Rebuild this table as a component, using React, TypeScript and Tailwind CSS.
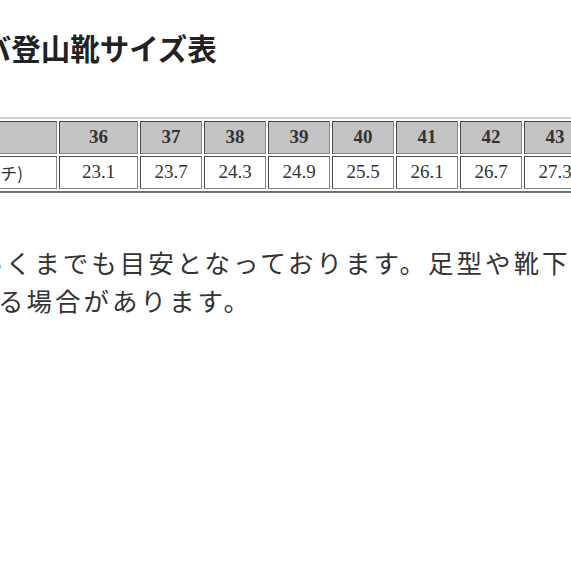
import React from "react";

const sizes = [
  { eu: "36", jp: "23.1", w: "w-[79px]" },
  { eu: "37", jp: "23.7", w: "w-[62px]" },
  { eu: "38", jp: "24.3", w: "w-[62px]" },
  { eu: "39", jp: "24.9", w: "w-[62px]" },
  { eu: "40", jp: "25.5", w: "w-[62px]" },
  { eu: "41", jp: "26.1", w: "w-[62px]" },
  { eu: "42", jp: "26.7", w: "w-[62px]" },
  { eu: "43", jp: "27.3", w: "w-[62px]" },
  { eu: "44", jp: "27.9", w: "w-[62px]" },
];

const serif = "font-['Liberation_Serif','Noto_Sans_CJK_JP',serif]";
const cell =
  "border border-t-[#4a4a4a] border-l-[#4a4a4a] border-b-[#8a8a8a] border-r-[#8a8a8a] h-[33px] p-0 text-center align-middle whitespace-nowrap overflow-hidden";

export default function App() {
  return (
    <div className="w-[571px] h-[571px] overflow-hidden bg-white">
      <div className="flex flex-col items-start pt-[32px]">
        <h1
          className={`ml-[-164px] whitespace-nowrap text-[29.5px] leading-[36px] font-bold text-[#222] ${serif}`}
        >
          スポルティバ登山靴サイズ表
        </h1>
        <table
          className={`mt-[49px] ml-[-100px] w-[752px] shrink-0 table-fixed border-separate border-spacing-[2px] border-2 border-t-[#cfcfcf] border-l-[#cfcfcf] border-b-[#707070] border-r-[#707070] bg-white ${serif}`}
        >
          <tbody>
            <tr>
              <td className={`${cell} w-[153px] bg-[#c4c4c4] font-bold text-[19px] text-[#333] text-right pr-[62px]`}>
                EUサイズ
              </td>
              {sizes.map((s) => (
                <td
                  key={s.eu}
                  className={`${cell} ${s.w} bg-[#c4c4c4] font-bold text-[19px] text-[#333]`}
                >
                  {s.eu}
                </td>
              ))}
            </tr>
            <tr>
              <td className={`${cell} text-[17px] text-[#333] text-right pr-[33px] font-['Noto_Sans_CJK_JP',sans-serif]`}>
                日本(センチ)
              </td>
              {sizes.map((s) => (
                <td key={s.eu} className={`${cell} text-[19px] text-[#333]`}>
                  {s.jp}
                </td>
              ))}
            </tr>
          </tbody>
        </table>
        <div className="mt-[50px] flex flex-col text-[25.5px] leading-[38px] tracking-[3px] text-[#333] font-['Noto_Sans_CJK_JP',sans-serif] whitespace-nowrap">
          <div className="ml-[-136px]">サイズはあくまでも目安となっております。足型や靴下の厚さによって異な</div>
          <div className="ml-[-2px]">る場合があります。</div>
        </div>
      </div>
    </div>
  );
}
